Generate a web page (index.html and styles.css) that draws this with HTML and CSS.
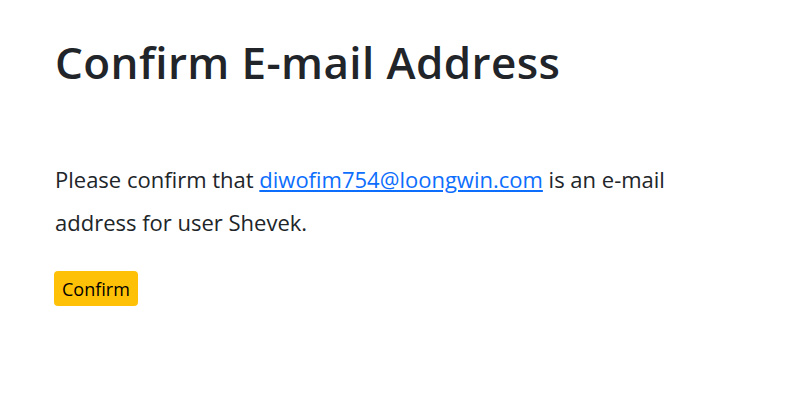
FILE: index.html
```html
<!DOCTYPE html>
<html lang="en">
<head>
<meta charset="utf-8">
<title>Confirm E-mail Address</title>
<link rel="stylesheet" href="styles.css">
</head>
<body>
<main class="page">
  <h1 class="title">Confirm E-mail Address</h1>
  <p class="message">Please confirm that <a class="mail" href="mailto:diwofim754@loongwin.com">diwofim754@loongwin.com</a> is an e-mail address for user Shevek.</p>
  <form class="actions">
    <button type="button" class="btn-confirm">Confirm</button>
  </form>
</main>
</body>
</html>
```
FILE: styles.css
```css
html, body {
  margin: 0;
  padding: 0;
  background: #fff;
}
body {
  font-family: "Open Sans", "DejaVu Sans", sans-serif;
  color: #212529;
}
.page {
  padding: 30px 55px 0;
  width: 640px;
}
.title {
  margin: 0;
  font-size: 44px;
  font-weight: 600;
  letter-spacing: 0.4px;
  line-height: 64px;
}
.message {
  margin: 64px 0 0;
  font-size: 22px;
  line-height: 43px;
}
.mail {
  color: #0d6efd;
}
.actions {
  margin: 27px 0 0;
}
.btn-confirm {
  font-family: inherit;
  font-size: 18px;
  color: #000;
  background: #ffc107;
  border: 0;
  border-radius: 4px;
  height: 35px;
  padding: 0 8px;
  margin-left: -1px;
}
```
